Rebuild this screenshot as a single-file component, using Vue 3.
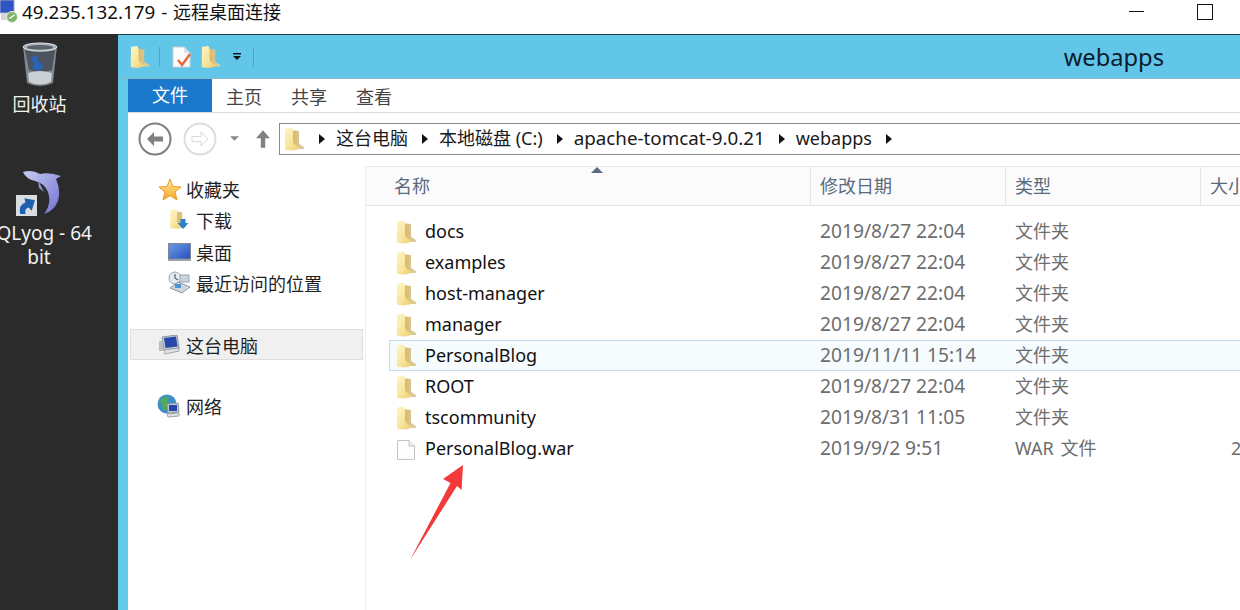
<script setup>
const files = [
  { name: 'docs', date: '2019/8/27 22:04', type: '文件夹', icon: 'folder' },
  { name: 'examples', date: '2019/8/27 22:04', type: '文件夹', icon: 'folder' },
  { name: 'host-manager', date: '2019/8/27 22:04', type: '文件夹', icon: 'folder' },
  { name: 'manager', date: '2019/8/27 22:04', type: '文件夹', icon: 'folder' },
  { name: 'PersonalBlog', date: '2019/11/11 15:14', type: '文件夹', icon: 'folder', selected: true },
  { name: 'ROOT', date: '2019/8/27 22:04', type: '文件夹', icon: 'folder' },
  { name: 'tscommunity', date: '2019/8/31 11:05', type: '文件夹', icon: 'folder' },
  { name: 'PersonalBlog.war', date: '2019/9/2 9:51', type: 'WAR 文件', icon: 'file', size: '2' }
]
const crumbs = ['这台电脑', '本地磁盘 (C:)', 'apache-tomcat-9.0.21', 'webapps']
</script>

<template>
  <div class="screen">
    <svg class="defs" width="0" height="0" aria-hidden="true">
      <defs>
        <linearGradient id="fg" x1="0" y1="0" x2="1" y2="1">
          <stop offset="0" stop-color="#fff6c8" />
          <stop offset="0.55" stop-color="#f8e49a" />
          <stop offset="1" stop-color="#e9c870" />
        </linearGradient>
        <linearGradient id="fb" x1="0" y1="0" x2="1" y2="0">
          <stop offset="0" stop-color="#dcb45a" />
          <stop offset="1" stop-color="#d8cfa8" />
        </linearGradient>
        <linearGradient id="screen" x1="0" y1="0" x2="1" y2="1">
          <stop offset="0" stop-color="#6f9be8" />
          <stop offset="1" stop-color="#2450bd" />
        </linearGradient>
        <symbol id="folder" viewBox="0 0 20 24">
          <path d="M6 3 L15 4 L15 17 L20 20 L20 22 L6 22 Z" fill="url(#fb)" />
          <path d="M1 1.5 L7 0.5 Q9 1 9 4 L9 14 Q9 17 13 19 L17 21 Q13 23 8 23.5 L2 23 Q0.8 22.5 0.8 21 Z" fill="url(#fg)" />
        </symbol>
      </defs>
    </svg>

    <header class="rdp-bar">
      <svg class="rdp-icon" width="20" height="24" viewBox="0 0 20 24">
        <rect x="0" y="0" width="14" height="13" fill="#2f55c4" stroke="#9aa4b8" />
        <rect x="1" y="13" width="15" height="7" fill="#d2d5d9" />
        <circle cx="12" cy="17" r="5.5" fill="#7fb56c" stroke="#e8f2e0" />
        <path d="M9.5 18.5 L14.5 15" stroke="#fff" stroke-width="1.4" />
      </svg>
      <span class="rdp-title">49.235.132.179 - <span class="rdp-cjk">远程桌面连接</span></span>
      <div class="rdp-controls">
        <span class="minimize"></span>
        <span class="maximize"></span>
      </div>
    </header>

    <div class="desktop">
      <aside class="desk-icons">
        <div class="desk-item bin-item">
          <svg width="40" height="46" viewBox="0 0 40 46">
            <path d="M3 4 Q20 -1 37 4 L33 41 Q20 47 7 41 Z" fill="#7e8790" />
            <path d="M5 8 Q20 12 35 8 L32 28 Q20 32 9 28 Z" fill="#4b545c" />
            <ellipse cx="20" cy="5" rx="17" ry="4" fill="#aab2b8" stroke="#dfe3e6" />
            <ellipse cx="20" cy="5.4" rx="13" ry="2.4" fill="#59626a" />
            <path d="M10 16 L17 13 L19 20 L24 24 L20 29 L12 27 L14 21 Z" fill="#2a62b5" />
            <path d="M8 31 Q20 27 32 31 L31 40 Q20 45 9 40 Z" fill="#c9cfd2" />
          </svg>
          <span class="desk-label">回收站</span>
        </div>
        <div class="desk-item sql-item">
          <div class="dolphin">
            <svg width="44" height="46" viewBox="0 0 44 46">
              <defs>
                <linearGradient id="dg" x1="0" y1="0" x2="1" y2="1">
                  <stop offset="0" stop-color="#c7cdf2" />
                  <stop offset="1" stop-color="#6f6fd0" />
                </linearGradient>
              </defs>
              <path d="M3 2 Q12 -1 20 4 Q30 2 41 6 L36 9 Q41 20 38 31 Q34 41 24 44 Q32 34 28 22 Q24 13 15 11 Q6 9 3 2 Z" fill="url(#dg)" />
              <path d="M18 10 L24 22 L19 18 Z" fill="#8e92dc" />
            </svg>
            <span class="shortcut">
              <svg width="21" height="21" viewBox="0 0 20 20">
                <rect width="20" height="20" fill="#d9dde0" />
                <path d="M4 18 Q2 10 9 7 L8 3 L18 5 L15 15 L12 12 Q8 13 9 18 Z" fill="#1d5fb0" />
              </svg>
            </span>
          </div>
          <span class="desk-label sql-label">SQLyog - 64<br />bit</span>
        </div>
      </aside>

      <div class="cyan-strip"></div>

      <main class="window">
        <div class="title-row">
          <div class="qat">
            <svg class="ic-folder" width="19" height="24"><use href="#folder" /></svg>
            <span class="qat-sep"></span>
            <svg class="qat-doc" width="20" height="24" viewBox="0 0 20 24">
              <path d="M1 2 L12 2 L18 8 L18 22 L1 22 Z" fill="#fbfbfb" stroke="#d0d0d0" />
              <path d="M12 2 L12 8 L18 8 Z" fill="#e0e0e0" />
              <path d="M6 15 L10 20 L18 9" fill="none" stroke="#e8683a" stroke-width="2.4" />
            </svg>
            <svg class="ic-folder qat-second" width="19" height="24"><use href="#folder" /></svg>
            <svg class="qat-drop" width="10" height="10" viewBox="0 0 10 10">
              <rect x="1" y="1" width="8" height="1.4" fill="#111" />
              <path d="M1 4 L9 4 L5 8 Z" fill="#111" />
            </svg>
            <span class="qat-sep sep-two"></span>
          </div>
          <span class="win-title">webapps</span>
        </div>

        <nav class="tabs">
          <span class="tab active">文件</span>
          <span class="tab">主页</span>
          <span class="tab">共享</span>
          <span class="tab">查看</span>
        </nav>

        <div class="address-row">
          <svg class="nav-btn" width="36" height="36" viewBox="0 0 36 36">
            <circle cx="17" cy="17" r="15.5" fill="#fff" stroke="#7f7f7f" stroke-width="2" />
            <path d="M9 17 L16 10 L16 14.5 L25 14.5 L25 19.5 L16 19.5 L16 24 Z" fill="#7f7f7f" />
          </svg>
          <svg class="nav-btn fwd" width="36" height="36" viewBox="0 0 36 36">
            <circle cx="17" cy="17" r="15.5" fill="#fff" stroke="#dedede" stroke-width="2" />
            <path d="M25 17 L18 10 L18 14.5 L9 14.5 L9 19.5 L18 19.5 L18 24 Z" fill="#fff" stroke="#d8d8d8" />
          </svg>
          <svg class="nav-drop" width="9" height="6" viewBox="0 0 10 6"><path d="M0 0 L10 0 L5 5 Z" fill="#8a8a8a" /></svg>
          <svg class="nav-up" width="14" height="20" viewBox="0 0 16 20"><path d="M8 0 L16 9 L10.5 9 L10.5 20 L5.5 20 L5.5 9 L0 9 Z" fill="#808080" /></svg>
          <div class="address">
            <svg class="ic-folder" width="20" height="24"><use href="#folder" /></svg>
            <span class="crumb-arrow first"></span>
            <template v-for="c in crumbs" :key="c">
              <span class="crumb" :class="{ wide: c.startsWith('apache') }">{{ c }}</span>
              <span class="crumb-arrow"></span>
            </template>
          </div>
        </div>

        <div class="panes">
          <section class="nav-pane">
            <div class="nav-item group">
              <svg width="24" height="23" viewBox="0 0 24 23">
                <defs>
                  <linearGradient id="star" x1="0" y1="0" x2="0" y2="1">
                    <stop offset="0" stop-color="#ffe9a0" />
                    <stop offset="1" stop-color="#f6a623" />
                  </linearGradient>
                </defs>
                <path d="M12 1 L15 8.5 L23 9 L17 14 L19 22 L12 17.6 L5 22 L7 14 L1 9 L9 8.5 Z" fill="url(#star)" stroke="#e89a2c" />
              </svg>
              <span>收藏夹</span>
            </div>
            <div class="nav-item sub">
              <svg class="sub-ic dl" width="20" height="24" viewBox="0 0 20 24">
                <use href="#folder" width="17" height="22" />
                <path d="M11 11 L16 11 L16 15 L19 15 L13.5 21 L8 15 L11 15 Z" fill="#2b82c9" />
              </svg>
              <span>下载</span>
            </div>
            <div class="nav-item sub desk-link">
              <svg class="sub-ic" width="23" height="18" viewBox="0 0 23 18">
                <rect x="0.5" y="0.5" width="22" height="15.5" fill="url(#screen)" stroke="#7d8694" />
                <rect x="0" y="16" width="23" height="2" fill="#9aa0a8" />
              </svg>
              <span>桌面</span>
            </div>
            <div class="nav-item sub">
              <svg class="sub-ic" width="23" height="23" viewBox="0 0 23 23">
                <circle cx="7" cy="7" r="6" fill="#e6eaee" stroke="#9aa4ad" />
                <path d="M7 3 L7 7 L10 9" fill="none" stroke="#56616c" stroke-width="1.2" />
                <rect x="12" y="4" width="9" height="7" fill="#c8d3df" stroke="#98a4b0" />
                <path d="M2 17 L10 11 L22 16 L14 22 Z" fill="#cfd6dc" stroke="#8e99a3" />
                <rect x="7" y="13" width="6" height="4" fill="#4c93cf" />
              </svg>
              <span>最近访问的位置</span>
            </div>
            <div class="nav-item pc">
              <svg width="22" height="20" viewBox="0 0 22 20">
                <path d="M3 2 L18 0 L20 13 L5 15 Z" fill="#c8ccd2" stroke="#8f969e" />
                <path d="M5 3 L17 1.5 L18.5 11.5 L6.5 13 Z" fill="#2748a8" />
                <path d="M5 15 L20 13 L20 16 L6 19 Z" fill="#dfe2e6" stroke="#a0a6ad" />
                <rect x="0" y="6" width="4" height="10" fill="#b9bec5" />
              </svg>
              <span>这台电脑</span>
            </div>
            <div class="nav-item net">
              <svg width="24" height="24" viewBox="0 0 24 24">
                <circle cx="10" cy="10" r="9.5" fill="#3f8fc4" />
                <path d="M3 6 Q8 2 12 3 L10 8 L13 12 L8 17 L5 12 Z" fill="#4faa5a" />
                <path d="M10 10 L21 9 L22 18 L11 19 Z" fill="#c8ccd2" stroke="#8f969e" />
                <rect x="12" y="11" width="8" height="6" fill="#2748a8" />
                <path d="M10 20 L22 19 L22 22 L11 23 Z" fill="#dfe2e6" stroke="#a0a6ad" />
              </svg>
              <span>网络</span>
            </div>
          </section>

          <section class="list">
            <div class="list-head">
              <div class="col name-col">名称<i class="sort"></i></div>
              <div class="col">修改日期</div>
              <div class="col">类型</div>
              <div class="col">大小</div>
            </div>
            <div class="rows">
              <div v-for="f in files" :key="f.name" class="row" :class="{ selected: f.selected }">
                <div class="cell name">
                  <svg v-if="f.icon === 'folder'" width="20" height="24"><use href="#folder" /></svg>
                  <svg v-else width="20" height="24" viewBox="0 0 20 24">
                    <path d="M1.5 3.5 L13 3.5 L18.5 9 L18.5 22.5 L1.5 22.5 Z" fill="#fdfdfd" stroke="#c4c4c4" />
                    <path d="M13 3.5 L13 9 L18.5 9" fill="#f0f0f0" stroke="#c4c4c4" />
                  </svg>
                  <span>{{ f.name }}</span>
                </div>
                <div class="cell muted date">{{ f.date }}</div>
                <div class="cell muted type">{{ f.type }}</div>
                <div class="cell muted size">{{ f.size }}</div>
              </div>
            </div>
          </section>
        </div>
      </main>
    </div>

    <svg class="red-arrow" width="70" height="110" viewBox="400 455 70 110">
      <path d="M463 465 L443 479 L450.5 483 L410 560 L457 486 L461.5 490 Z" fill="#f4393a" />
    </svg>
  </div>
</template>

<style>
html, body { margin: 0; background: #fff; overflow: hidden; }
</style>

<style scoped>
.screen {
  position: relative;
  width: 1240px;
  height: 610px;
  overflow: hidden;
  display: flex;
  flex-direction: column;
  font-family: "Noto Sans", "Noto Sans CJK SC", sans-serif;
  font-size: 18px;
  color: #1a1a1a;
}
.defs { position: absolute; }

.rdp-bar {
  height: 34px;
  flex: none;
  display: flex;
  align-items: flex-start;
  background: #fff;
  box-sizing: border-box;
}
.rdp-icon { flex: none; }
.rdp-title { margin: -1px 0 0 2px; font-size: 18.8px; line-height: 26px; color: #111; word-spacing: 1px; }
.rdp-cjk { font-size: 18px; }
.rdp-controls { margin-left: auto; display: flex; align-items: flex-start; }
.minimize { width: 15px; height: 1px; background: #111; margin: 11px 53px 0 0; }
.maximize { width: 14px; height: 14px; border: 1px solid #111; margin: 4px 27px 0 0; }

.desktop { flex: 1; display: flex; min-height: 0; }
.desk-icons {
  width: 118px;
  flex: none;
  background: #2b2b2b;
  color: #f2f2f2;
}
.desk-item { width: 78px; display: flex; flex-direction: column; align-items: center; }
.bin-item { padding-top: 8px; padding-left: 1px; box-sizing: border-box; }
.sql-item { margin-top: 54px; }
.desk-label { text-align: center; line-height: 23px; white-space: nowrap; }
.bin-item .desk-label { margin-top: 5px; }
.sql-label { margin-top: 5px; font-size: 19px; line-height: 24px; }
.dolphin { position: relative; height: 46px; width: 44px; margin-left: 6px; }
.shortcut { position: absolute; left: -4px; bottom: 0; line-height: 0; }

.cyan-strip { width: 10px; flex: none; background: #62cbe9; }

.window { flex: 1; min-width: 0; display: flex; flex-direction: column; background: #fff; }
.title-row {
  height: 45px;
  flex: none;
  margin-left: -10px;
  padding-left: 12px;
  background: #62c6e8;
  border-top: 1px solid #24424e;
  box-sizing: border-box;
  display: flex;
  align-items: center;
  border-bottom: 1px solid #8fb8c6;
}
.qat { display: flex; align-items: center; width: 132px; flex: none; }
.qat > * { flex: none; }
.qat-sep { width: 1px; height: 20px; background: #6d9bad; margin-left: 10px; }
.qat-doc { margin-left: 12px; }
.qat-second { margin-left: 9px; }
.qat-drop { margin-left: 12px; }
.sep-two { margin-left: 11px; }
.win-title { margin-left: auto; margin-right: 76px; font-size: 23.7px; color: #0c1c2c; line-height: 30px; }

.tabs {
  height: 34px;
  flex: none;
  display: flex;
  box-sizing: border-box;
  border-bottom: 1px solid #dcdcdc;
  color: #444;
}
.tab { padding: 0 15px 0 14px; line-height: 36px; }
.tab.active {
  width: 84px;
  height: 33px;
  box-sizing: border-box;
  background: #1b79cc;
  color: #fff;
  text-align: center;
  padding: 0;
  line-height: 32px;
}

.address-row {
  height: 53px;
  flex: none;
  display: flex;
  align-items: center;
  padding: 0 0 1px 10px;
  box-sizing: border-box;
}
.address-row > * { flex: none; }
.nav-btn { margin-top: 1px; }
.fwd { margin-left: 9px; }
.nav-drop { margin-left: 11px; }
.nav-up { margin-left: 17px; }
.address {
  width: 1000px;
  height: 32px;
  margin-left: 9px;
  box-sizing: border-box;
  border: 1px solid #8a8a8a;
  display: flex;
  align-items: center;
  padding-left: 4px;
}
.address > svg { flex: none; }
.crumb { line-height: 28px; padding-bottom: 2px; white-space: nowrap; }
.crumb.wide { font-size: 18.8px; }
.crumb-arrow {
  flex: none;
  width: 0;
  height: 0;
  margin: 0 11px 0 14px;
  border-left: 6px solid #111;
  border-top: 5px solid transparent;
  border-bottom: 5px solid transparent;
}
.crumb-arrow.first { margin-left: 15px; }

.panes { flex: 1; min-height: 0; display: flex; }
.nav-pane {
  width: 238px;
  flex: none;
  box-sizing: border-box;
  border-right: 1px solid #eceff1;
  padding-top: 8px;
}
.nav-item { display: flex; align-items: center; height: 31px; color: #1f1f1f; }
.group { padding-left: 30px; height: 30px; }
.group span { margin-left: 4px; }
.sub { padding-left: 40px; }
.sub-ic { width: 23px; margin-right: 5px; flex: none; }
.desk-link { margin-top: 1px; }
.pc {
  margin: 31px 2px 0;
  padding-left: 28px;
  box-sizing: border-box;
  background: #f0f0f0;
  border: 1px solid #dedede;
}
.pc span { margin-left: 5px; }
.net { margin-top: 30px; padding-left: 29px; }
.net span { margin-left: 5px; }

.list { flex: 1; min-width: 0; }
.list-head {
  height: 40px;
  box-sizing: border-box;
  display: grid;
  grid-template-columns: 445px 195px 195px 200px;
  background: #fbfbfb;
  border-top: 1px solid #e6e6e6;
  border-bottom: 1px solid #e4e4e4;
  color: #5a6a7e;
}
.col {
  padding-left: 9px;
  line-height: 38px;
  border-right: 1px solid #e4e4e4;
  white-space: nowrap;
  overflow: hidden;
}
.col:first-child { padding-left: 28px; position: relative; overflow: visible; }
.col:last-child { border-right: 0; }
.sort {
  position: absolute;
  left: 225px;
  top: 0;
  border-left: 6px solid transparent;
  border-right: 6px solid transparent;
  border-bottom: 6px solid #5b6b82;
}
.rows { padding-top: 10px; }
.row {
  height: 31px;
  box-sizing: border-box;
  margin-left: 23px;
  display: grid;
  grid-template-columns: 421px 195px 195px 200px;
  align-items: center;
  border: 1px solid transparent;
  border-right: 0;
}
.row.selected { background: #f6fbfe; border-color: #c5dcee; }
.cell { white-space: nowrap; line-height: 29px; }
.name { display: flex; align-items: center; padding-left: 6px; color: #111; }
.name span { margin-left: 9px; }
.muted { padding-left: 9px; color: #6d6d6d; }
.date { font-size: 19.2px; line-height: 27px; padding-bottom: 2px; }
.type { word-spacing: 2px; }
.size { padding-left: 30px; }

.red-arrow { position: absolute; left: 400px; top: 455px; }
</style>
